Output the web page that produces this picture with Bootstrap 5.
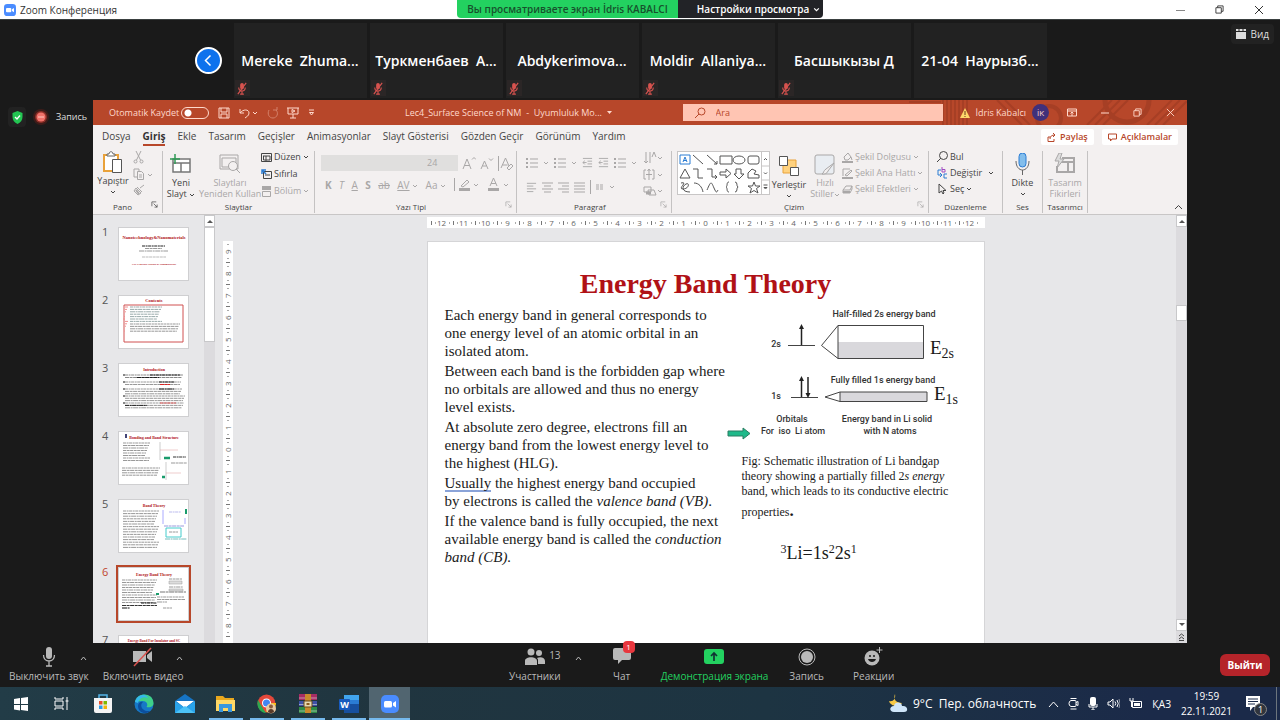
<!DOCTYPE html>
<html lang="ru">
<head>
    <meta charset="UTF-8">
    <meta name="viewport" content="width=device-width, initial-scale=1.0">
    <title>Zoom Конференция</title>
    <link href="https://cdn.jsdelivr.net/npm/bootstrap@5.3.2/dist/css/bootstrap.min.css" rel="stylesheet">
    <style>
        body {
            height: 100vh;
            background-color: #1a1a1a;
            font-family: "Open Sans", "Noto Sans", sans-serif;
            font-size: 10px;
            line-height: 14px;
            overflow: hidden;
        }
        svg { display: block; flex-shrink: 0; }
        button { font: inherit; color: inherit; background: none; border: 0; padding: 0; }
        .ico { fill: none; stroke: currentColor; }
        .keep-space { white-space: pre; }
        .third { flex: 1 1 0; }

        /* Заголовок окна */
        .win-title { height: 19px; background: #fff; color: #333; }
        .win-btns { gap: 30px; margin-right: 16px; }
        .share-pill { height: 18px; font-weight: 600; font-size: 10px; border-radius: 0 0 4px 4px; overflow: hidden; }
        .share-who { background: #23d160; color: #17502c; width: 221px; }
        .share-opt { background: #222327; color: #fff; width: 145px; }

        /* Лента участников */
        .people { height: 81px; padding: 3px 0 2px; border-top: 1px solid #3a4040; }
        .people-list { gap: 3px; }
        .person { width: 133px; background: #222; color: #fff; font-size: 14px; font-weight: 600; white-space: pre; }
        .muted { left: 1px; bottom: 2px; width: 15px; height: 16px; background: #2b2626; }
        .prev-btn { width: 27px; height: 27px; border-radius: 50%; border: 2px solid #fff; background: #0e72ed; margin-right: 12px; }
        .view-btn { height: 20px; padding: 0 5px; border-radius: 4px; background: #222; color: #ddd; margin: 1px 6px; font-size: 10px; }
        .side { width: 93px; color: #ddd; font-size: 10px; }
        .side-in { padding: 7px 0 0 8px; gap: 6px; }
        .shield-box { width: 18px; height: 20px; background: #222; border-radius: 4px; }

        /* PowerPoint */
        .ppt { background: #e7e7e9; font-size: 9px; line-height: 12px; color: #444; }
        .ppt-title { height: 25px; background: #b7472a; color: #ffd9cc; }
        .ppt-title .left-part { width: 312px; padding-left: 16px; gap: 9px; }
        .user-part { padding: 0 12px 0 17px; gap: 6px; }
        .win-ctl { gap: 24px; padding-left: 12px; }
        .search-box { height: 17px; width: 260px; background: #ffc5b3; color: #b7472a; padding: 0 11px; }
        .search-box input { border: 0; background: none; font: inherit; color: inherit; outline: 0; min-width: 0; }
        .search-box input::placeholder { color: #b7472a; }
        .avatar { width: 17px; height: 17px; border-radius: 50%; background: #40307a; font-size: 8px; }
        .toggle-sw { appearance: none; width: 28px; height: 12px; border: 1px solid #ffd9cc; border-radius: 6px; margin: 0;
            background: radial-gradient(circle at 6px 5px, #fff 3px, transparent 4px); }
        .tabs-row { height: 24px; background: #f3f0f0; padding: 0 9px; font-size: 10px; }
        .tabs-list { gap: 12px; }
        .tabs-row .tab-link { color: #444; text-decoration: none; line-height: 15px; border-bottom: 2px solid transparent; }
        .tabs-row .tab-link.active { font-weight: 700; border-color: #b7472a; color: #333; }
        .red-btn { background: #fff; color: #b7472a; font-weight: 600; font-size: 9px; height: 16px; padding: 0 6px; border-radius: 2px; }
        .ribbon { height: 66px; background: #f3f0f0; border-bottom: 1px solid #c8c6c6; }
        .rgroup { border-right: 1px solid #c4c2c2; margin: 2px 0 1px; }
        .rgroup .foot { height: 12px; line-height: 11px; font-size: 8px; }
        .off { color: #a9a7a7; }
        .big { line-height: 11px; text-align: center; }
        .gap-s { gap: 4px; }
        .gap-xs { gap: 2px; }
        .font-sel { height: 16px; border: 0; background: #e0dfde; color: #a9a7a7; font: inherit; padding: 0 2px; appearance: none; border-radius: 0; }
        .shapes { border: 1px solid #c8c6c6; background: #fff; width: 93px; height: 44px; }
        .w-pano { width: 70px; } .w-slides { width: 152px; } .w-font { width: 202px; } .w-par { width: 155px; }
        .w-draw { width: 257px; } .w-edit { width: 74px; } .w-voice { width: 40px; } .w-design { width: 45px; }

        .thumbs { width: 111px; padding: 12px 0 0 9px; }
        .thumb-row { height: 54px; margin-bottom: 14px; }
        .thumb-num { width: 16px; font-size: 11px; line-height: 10px; color: #555; }
        .thumb { width: 71px; height: 54px; background: #fff; border: 1px solid #cfcfd1; }
        .thumb-on { outline: 2px solid #b7472a; }
        .thumb-row .red-num { color: #c0452c; }
        .vscroll { width: 11px; background: #dcdbde; }
        .vscroll .box { background: #fff; border: 1px solid #c8c8ca; height: 12px; }
        .vscroll .grip { background: #fff; border: 1px solid #c8c8ca; }
        .vruler { width: 10px; background: #fff; margin-top: 26px; overflow: hidden; color: #666; }
        .vruler span { height: 22px; flex-shrink: 0; writing-mode: vertical-rl; transform: rotate(180deg); text-align: center; line-height: 10px; font-size: 8px;
            background: linear-gradient(#777, #777) center 0 / 4px 1px no-repeat, linear-gradient(#aaa, #aaa) center 4px / 2px 1px no-repeat, linear-gradient(#aaa, #aaa) center 18px / 2px 1px no-repeat; }
        .canvas { padding-left: 2px; }
        .hruler { width: 558px; height: 11px; background: #fff; margin: 2px auto 13px; padding: 0 4px; color: #666; }
        .hruler span { flex: 1; text-align: center; line-height: 11px; font-size: 8px;
            background: linear-gradient(#777, #777) 0 center / 1px 4px no-repeat, linear-gradient(#aaa, #aaa) 4px center / 1px 2px no-repeat, linear-gradient(#aaa, #aaa) 18px center / 1px 2px no-repeat; }
        .slide { width: 558px; margin: 0 auto; background: #fff; border: 1px solid #d5d5d7; border-bottom: 0; padding: 26px 0 0 17px;
            font-family: "Liberation Serif", "Noto Sans", serif; color: #1a1a1a; }
        .slide h1 { font-size: 28px; line-height: 32px; font-weight: 700; color: #b01116; text-align: center; margin: 0 17px 6px 0; }
        .slide-text { width: 297px; font-size: 15px; line-height: 18px; white-space: nowrap; }
        .slide-text p { margin: 0 0 2px; }
        .spell { border-bottom: 2px solid #8aa3d8; display: inline-block; line-height: 14px; }
        .fig-text { font-size: 12px; line-height: 15px; white-space: nowrap; margin: 12px 0 16px; }
        .fig-text .last-line { line-height: 24px; }
        .fig-text b { font-size: 17px; }
        .formula { font-size: 18px; line-height: 26px; padding-left: 39px; }
        .formula sup { font-size: 12px; }
        .green-arrow { left: 299px; top: 185px; }

        /* Нижняя панель Zoom */
        .zoom-bar { height: 44px; padding: 0 10px 0 9px; color: #b9b9b9; font-size: 10px; }
        .zb { display: flex; flex-direction: column; align-items: center; line-height: 18px; }
        .zb .zi { height: 24px; display: flex; align-items: center; justify-content: center; padding-top: 3px; }
        .up { height: 28px; padding-top: 2px; }
        .leave { background: #b5242a; color: #fff; font-weight: 700; width: 50px; height: 22px; border-radius: 6px; }
        .chat-badge { left: 10px; top: -7px; width: 12px; height: 12px; font-size: 8px; line-height: 12px; background: #e8373e; color: #fff; border-radius: 4px; }

        /* Панель задач Windows */
        .taskbar { height: 33px; background: linear-gradient(90deg, #223c47, #20353f 30%, #1d3442 60%, #1b2a49 90%); color: #fff; font-size: 11px; }
        .task { width: 41px; height: 33px; display: flex; align-items: center; justify-content: center; }
        .run { background: linear-gradient(#76b9ed, #76b9ed) center bottom / 34px 2px no-repeat; }
        .task-on { background: linear-gradient(#76b9ed, #76b9ed) center bottom / 41px 2px no-repeat #516570; }
        .weather { font-size: 12px; }
        .tray { gap: 9px; padding: 0 10px 0 12px; font-size: 10px; }
        .clock { font-size: 10px; line-height: 15px; }
        .note-num { left: 8px; top: 7px; width: 13px; height: 13px; border-radius: 50%; background: #30353d; border: 1px solid #888; font-size: 9px; line-height: 11px; }
        .desk-edge { height: 33px; margin: 0 3px 0 15px; }
    </style>
</head>
<body class="d-flex flex-column">
    <svg width="0" height="0" class="position-absolute">
        <symbol id="car" viewBox="0 0 6 4"><path d="M1 1l2 2 2-2" fill="none" stroke="currentColor"/></symbol>
        <symbol id="launch" viewBox="0 0 8 8"><path d="M1 6V1h5M3 3l4 4M7 4v3H4" fill="none" stroke="currentColor" stroke-width=".8"/></symbol>
        <symbol id="mute" viewBox="0 0 12 14"><rect x="4" y="1" width="4" height="7" rx="2" fill="#d9534f"/><path d="M2.500 6c0 5 7 5 7 0M6 10v3M4 13h4M1.500 13L10.500 1" stroke="#d9534f" stroke-width="1.200" fill="none"/></symbol>
        <symbol id="restore" viewBox="0 0 10 10"><path d="M1 3h6v6H1zM3 3V1h6v6H7" fill="none" stroke="currentColor"/></symbol>
        <symbol id="xx" viewBox="0 0 10 10"><path d="M1 1l8 8M9 1L1 9" fill="none" stroke="currentColor"/></symbol>
        <symbol id="al" viewBox="0 0 12 12"><path d="M1 2h10M1 5h7M1 8h10M1 11h7" fill="none" stroke="currentColor"/></symbol>
        <symbol id="lst" viewBox="0 0 12 12"><path d="M4 2h8M4 6h8M4 10h8" fill="none" stroke="currentColor"/><path d="M0 2h2M0 6h2M0 10h2" stroke="currentColor" stroke-width="2"/></symbol>
        <symbol id="ind" viewBox="0 0 12 12"><path d="M1 1h10M6 4h5M6 7h5M1 10h10M5 5.500H1M3 3.500l-2 2 2 2" fill="none" stroke="currentColor"/></symbol>
        <symbol id="cam" viewBox="0 0 18 18"><rect width="18" height="18" rx="5" fill="#4a8cff"/><rect x="3" y="6" width="8" height="6.500" rx="1.500" fill="#fff"/><path d="M12 8l3-2v6.500l-3-2z" fill="#fff"/></symbol>
    </svg>

    <header class="win-title d-flex flex-shrink-0">
        <div class="third d-flex align-items-center">
            <svg class="ms-1 me-1" width="12" height="12"><use href="#cam"/></svg>
            <span>Zoom Конференция</span>
        </div>
        <div class="share-pill d-flex">
            <div class="share-who d-flex align-items-center justify-content-center">Вы просматриваете экран İdris KABALCI</div>
            <button class="share-opt d-flex align-items-center justify-content-center gap-1 ps-3">Настройки просмотра <svg width="7" height="5"><use href="#car"/></svg></button>
        </div>
        <div class="third d-flex align-items-center justify-content-end">
            <div class="win-btns d-flex align-items-center">
                <button aria-label="Свернуть"><svg width="9" height="9"><path d="M0 5.500h9" stroke="#888"/></svg></button>
                <button aria-label="Развернуть"><svg width="9" height="9"><use href="#restore"/></svg></button>
                <button aria-label="Закрыть"><svg width="10" height="10"><use href="#xx"/></svg></button>
            </div>
        </div>
    </header>

    <section class="people d-flex flex-shrink-0">
        <div class="third d-flex align-items-center justify-content-end">
            <button class="prev-btn d-flex align-items-center justify-content-center" aria-label="Назад"><svg width="8" height="13"><path d="M6.500 1.500l-5 5 5 5" fill="none" stroke="#fff" stroke-width="1.500"/></svg></button>
        </div>
        <div class="people-list d-flex" id="people"></div>
        <div class="third d-flex align-items-start justify-content-end">
            <button class="view-btn d-flex align-items-center gap-1"><svg width="10" height="10" fill="#ddd"><path d="M0 0h2.500v2H0zM3.500 0h3v2h-3zM7.500 0H10v2H7.500zM0 3h10v7H0z"/></svg>Вид</button>
        </div>
    </section>

    <main class="d-flex flex-fill" style="min-height: 0">
        <aside class="side">
            <div class="side-in d-flex align-items-center">
                <div class="shield-box d-flex align-items-center justify-content-center">
                    <svg width="11" height="13"><path d="M5.500 0l5 2v4c0 3.500-2 5.500-5 7-3-1.500-5-3.500-5-7V2z" fill="#23c552"/><path d="M3 6l2 2 3-3.500" stroke="#fff" fill="none" stroke-width="1.300"/></svg>
                </div>
                <svg width="18" height="18"><circle cx="9" cy="9" r="8" fill="#3d1c19"/><circle cx="9" cy="9" r="6" fill="#8e2f28"/><circle cx="9" cy="9" r="4.500" fill="#f0726a"/><path d="M6 9h6" stroke="#ffc9c0"/></svg>
                <span style="font-size: 9px">Запись</span>
            </div>
        </aside>

        <section class="ppt flex-fill d-flex flex-column" style="min-width: 0">
            <div class="ppt-title d-flex align-items-center flex-shrink-0 position-relative">
                <svg class="position-absolute end-0 top-0" width="280" height="25" fill="none" stroke="#9c3a22" stroke-width="2" opacity=".6">
                    <path d="M2 2h32M36 0v25M40 0v25M44 0v25M48 0v25M52 0v25M56 0v25M60 0v25M90 0l25 25M98 0l25 25M180 25l25-25M188 25l25-25M196 25l25-25M240 25l25-25M248 25l25-25M256 25l24-24"/>
                    <circle cx="142" cy="18" r="12" stroke-width="4"/><circle cx="220" cy="0" r="22" stroke-width="5"/>
                </svg>
                <div class="left-part d-flex align-items-center">
                    <label class="d-flex align-items-center gap-xs text-nowrap">Otomatik Kaydet <input type="checkbox" class="toggle-sw"></label>
                    <svg class="ico" width="12" height="12"><path d="M1 1h10v10H1zM3 1v4h6V1M3 11V7h6v4"/></svg>
                    <svg class="ico" width="19" height="12"><path d="M1 2v4h4M1 6c3-4 9-4 9 0 0 3-3 4-4 5M14 5l2 2 2-2"/></svg>
                    <svg class="ico" width="11" height="12" opacity=".4"><path d="M2 3c-2 4 0 8 4 8s6-5 3-8M6 3h4V0"/></svg>
                    <svg class="ico" width="12" height="12"><path d="M0 1h12M1 1v6h10V1M6 7v4M3 11h6M5 2.500l3 1.500-3 1.500z"/></svg>
                    <svg class="ico" width="7" height="7"><path d="M1 1h5M1.500 3.500h4L3.500 6z"/></svg>
                </div>
                <div class="flex-fill keep-space">Lec4_Surface Science of NM  -  Uyumluluk Mo...  <svg class="d-inline" width="5" height="4"><path d="M0 0h5L2.500 3z" fill="#ffd9cc"/></svg></div>
                <label class="search-box d-flex align-items-center gap-2 position-relative">
                    <svg class="ico" width="12" height="12"><circle cx="7.500" cy="4.500" r="3.500"/><path d="M5 7l-4 4"/></svg>
                    <input type="text" placeholder="Ara" aria-label="Ara">
                </label>
                <div class="user-part d-flex align-items-center position-relative">
                    <svg width="10" height="10"><path d="M5 0l5 10H0z" fill="#ffd76a"/><path d="M5 3v4M5 8v1" stroke="#6b3a1c"/></svg>
                    <span>İdris Kabalcı</span>
                    <span class="avatar d-flex align-items-center justify-content-center">İK</span>
                    <div class="win-ctl d-flex align-items-center">
                        <svg class="ico" width="10" height="9"><path d="M.5 1h9v7h-9zM.5 3h9M5 8V4M3.500 5.500L5 4l1.500 1.500"/></svg>
                        <svg class="ico" width="8" height="9"><path d="M0 5h8"/></svg>
                        <svg width="9" height="9"><use href="#restore"/></svg>
                        <svg width="9" height="9"><use href="#xx"/></svg>
                    </div>
                </div>
            </div>

            <nav class="tabs-row d-flex align-items-center flex-shrink-0">
                <div class="tabs-list d-flex text-nowrap" id="tabs"></div>
                <div class="ms-auto d-flex gap-2">
                    <button class="red-btn d-flex align-items-center gap-1"><svg class="ico" width="9" height="9"><path d="M3 4H1v4.500h6V6M3 6c0-3 2-4 5-4M6 0l2 2-2 2"/></svg>Paylaş</button>
                    <button class="red-btn d-flex align-items-center gap-1"><svg class="ico" width="9" height="9"><path d="M.5 1h8v5H4L2.500 8V6h-2z"/></svg>Açıklamalar</button>
                </div>
            </nav>

            <div class="ribbon d-flex flex-shrink-0">
                <div class="rgroup w-pano d-flex flex-column">
                    <div class="flex-fill d-flex">
                        <button class="big d-flex flex-column align-items-center" style="width: 40px">
                            <svg width="20" height="24" fill="#fff"><path d="M1 4h14v16H1z" stroke="#e9a23b" stroke-width="2"/><path d="M4 5V3h2c0-3 4-3 4 0h2v2z" stroke="#666"/><path d="M9.500 8.500h9v13h-9z" stroke="#555"/></svg>
                            Yapıştır<svg class="mt-1" width="6" height="4"><use href="#car"/></svg>
                        </button>
                        <div class="off d-flex flex-column gap-s">
                            <svg class="ico" width="11" height="13"><path d="M3 0l4.500 9M8 0L3.500 9"/><circle cx="2.500" cy="10.500" r="1.500"/><circle cx="8.500" cy="10.500" r="1.500"/></svg>
                            <svg class="ico" width="20" height="12"><path d="M5 9H1V1h5v2M4.500 3.500h4l2 2v6h-6zM6 7h3M6 9h3M15 6l2 2 2-2"/></svg>
                            <svg class="ico" width="12" height="12"><path d="M11 1L7 4M4 3l5 5M3 4l5 5-3 2-4-4z"/><path d="M3 6l3 4" stroke-width="2"/></svg>
                        </div>
                    </div>
                    <div class="foot d-flex justify-content-between pe-1" style="padding-left: 20px">Pano <svg width="7" height="7"><use href="#launch"/></svg></div>
                </div>
                <div class="rgroup w-slides d-flex flex-column">
                    <div class="flex-fill d-flex text-nowrap">
                        <button class="big" style="width: 36px">
                            <svg class="mx-auto" width="22" height="24"><path d="M3 6h17v13H3zM3 10h17M11 10v9" fill="#fff" stroke="#777" stroke-width="1.500"/><path d="M5 1v10M0 6h10" stroke="#2f9a55" stroke-width="1.500"/></svg>
                            Yeni<br>Slayt <svg class="d-inline" width="6" height="4"><use href="#car"/></svg>
                        </button>
                        <button class="big off" style="width: 62px">
                            <svg class="ico mx-auto" width="22" height="24"><path d="M1 2h18v14H1zM3 5h14v9H3z"/><circle cx="14" cy="13" r="4.500" fill="#f3f0f0"/><path d="M17 16l4 4"/></svg>
                            Slaytları<br>Yeniden Kullan
                        </button>
                        <div class="d-flex flex-column" style="gap: 5px">
                            <button class="d-flex align-items-center gap-xs"><svg width="11" height="9" class="ico"><path d="M.5.5h10v8H.5zM2 3h7M5 3v5M2.500 3v4h6.500V3"/></svg>Düzen <svg width="6" height="4"><use href="#car"/></svg></button>
                            <button class="d-flex align-items-center gap-xs"><svg width="11" height="10" class="ico"><path d="M2.500 2.500h8v7h-8zM4 6h5"/><path d="M1 5V1h4M1 1l4 4" stroke="#2b7cd3" stroke-width="1.500"/></svg>Sıfırla</button>
                            <button class="off d-flex align-items-center gap-xs"><svg width="11" height="11" class="ico"><path d="M1 1h9M1 3h9" stroke-width="2"/><path d="M1.500 5.500h8v5h-8z"/></svg>Bölüm <svg width="6" height="4"><use href="#car"/></svg></button>
                        </div>
                    </div>
                    <div class="foot text-center">Slaytlar</div>
                </div>
                <div class="rgroup w-font off d-flex flex-column">
                    <div class="flex-fill d-flex flex-column" style="padding: 4px 3px 0 6px; gap: 7px">
                        <div class="d-flex align-items-center gap-1">
                            <div class="d-flex"><select class="font-sel" style="width: 104px" aria-label="Yazı tipi"><option></option></select><select class="font-sel" style="width: 33px" aria-label="Boyut"><option>24</option></select></div>
                            <svg class="ico" width="14" height="14"><path d="M1 13L5 3l4 10M2.500 9.500h5M10 3.500L12 1.500l2 2"/></svg>
                            <svg class="ico" width="14" height="14"><path d="M1 13l3.500-8L8 13M2.500 10h4M9 2.500l2 2 2-2"/></svg>
                            <svg class="ico" width="16" height="15"><path d="M.5 0v15M3 12L7.500 2 11 10M4.500 9h5M9 12l4-4 2 2-4 4z"/></svg>
                        </div>
                        <div class="d-flex align-items-center justify-content-between" style="padding: 0 4px; font-size: 10px">
                            <b>K</b><i>T</i><u>A</u><b>S</b><s>ab</s><span><u>AV</u> <svg class="d-inline" width="6" height="4"><use href="#car"/></svg></span>
                            <span>Aa <svg class="d-inline" width="6" height="4"><use href="#car"/></svg></span>
                            <svg class="ico" width="26" height="13"><path d="M.5 0v13M7 8l6-6 2 2-6 5zM20 6l2 2 2-2"/><path d="M5 11.500h11" stroke-width="3"/></svg>
                            <svg class="ico" width="22" height="13"><path d="M3 8l3.500-8L10 8M4 5.500h5M17 6l2 2 2-2"/><path d="M1 11.500h11" stroke-width="3"/></svg>
                        </div>
                    </div>
                    <div class="foot d-flex pe-1" style="color: #444; padding-left: 81px">Yazı Tipi <svg class="ms-auto off" width="7" height="7"><use href="#launch"/></svg></div>
                </div>
                <div class="rgroup w-par off d-flex flex-column">
                    <div class="flex-fill d-flex justify-content-between" style="padding: 0 8px 0 9px">
                        <div class="d-flex flex-column" style="padding-top: 6px; gap: 11px">
                            <div class="d-flex align-items-center" style="gap: 5px">
                                <svg width="12" height="12"><use href="#lst"/></svg><svg width="6" height="4"><use href="#car"/></svg>
                                <svg width="12" height="12"><use href="#lst"/></svg><svg width="6" height="4"><use href="#car"/></svg>
                                <svg width="11" height="12"><use href="#ind"/></svg><svg width="11" height="12"><use href="#ind"/></svg>
                                <svg width="12" height="12"><use href="#lst"/></svg><svg width="6" height="4"><use href="#car"/></svg>
                            </div>
                            <div class="d-flex align-items-center" style="gap: 5px">
                                <svg width="11" height="12"><use href="#al"/></svg><svg class="ico" width="11" height="12"><path d="M0 2h11M2 5h7M0 8h11M2 11h7"/></svg><svg class="ico" width="11" height="12"><path d="M0 2h11M4 5h7M0 8h11M4 11h7"/></svg><svg class="ico" width="11" height="12"><path d="M0 2h11M0 5h11M0 8h11M0 11h11"/></svg>
                                <svg class="ico" width="14" height="14"><path d="M.5 0v14M6 5h3M10 5h3M6 7h3M10 7h3M6 9h3M10 9h3"/></svg><svg width="6" height="4"><use href="#car"/></svg>
                            </div>
                        </div>
                        <div class="d-flex flex-column gap-s">
                            <svg class="ico" width="20" height="13"><path d="M3 1v11M1 10l2 2 2-2M7 12V1M9 6l2-5 2 5M15 6l2 2 2-2"/></svg>
                            <svg class="ico" width="20" height="13"><path d="M3 2H1v9h2M9 2h2v9H9M6 1v11M3 6.500h6M4.500 3L6 1l1.500 2M15 6l2 2 2-2"/></svg>
                            <svg class="ico" width="20" height="12"><path d="M1 2h7v5H1zM5 5h6l2 5H6zM15 5l2 2 2-2"/><path d="M3 8h5" stroke-width="3"/></svg>
                        </div>
                    </div>
                    <div class="foot d-flex pe-1" style="color: #444; padding-left: 57px">Paragraf <svg class="ms-auto off" width="7" height="7"><use href="#launch"/></svg></div>
                </div>
                <div class="rgroup w-draw d-flex flex-column">
                    <div class="flex-fill d-flex text-nowrap" style="padding-left: 5px">
                        <div class="shapes">
                            <svg class="ico" width="91" height="42" color="#555">
                                <path d="M2 3h10v9H2z" stroke="#2b7cd3"/><path d="M5 10l2-5 2 5M5.500 8.500h3" stroke="#2b7cd3"/>
                                <path d="M15 3l10 9M29 3l10 9v-3M39 12h-3M42 4h12v8H42z"/><ellipse cx="61" cy="8" rx="6" ry="4"/><rect x="70" y="4" width="11" height="8" rx="2"/>
                                <path d="M7 17l5 9H2zM15 17h5v9h5M29 17h5v8h5l-2-2M39 25l-2 2M42 20h6v-3l5 4.500-5 4.500v-3h-6zM58 17h5v5h3l-5 5-5-5h2zM70 26v-5l4-4 4 2-2 3 5 1v3z"/>
                                <path d="M3 31c8-2-4 6 2 6s7-7 3-5-5 8 4 8M16 31c5 0 8 4 9 9M29 38c4-9 4-9 7-2s3 3 4 2M51 30c-3 0-1 4-3 5 2 1 0 5 3 5M57 30c3 0 1 4 3 5-2 1 0 5-3 5M76 30l1.500 4H82l-3.500 2.500L80 41l-4-2.500L72 41l1.500-4.500L70 34h4.500z"/>
                                <path d="M83.500 0v42M83.500 14h8M83.500 28h8" stroke="#c8c6c6"/><path d="M86 8l1.500-1.500L89 8M86 20.500l1.500 1.500 1.500-1.500M85.500 33h4M86 35.500h3L87.500 37z"/>
                            </svg>
                        </div>
                        <button class="big" style="width: 38px">
                            <svg class="mx-auto" width="22" height="24"><path d="M5 5h13v13H5z" fill="#ffd27f" stroke="#e9a23b"/><path d="M1.500 1.500h8v9h-8zM12.500 12.500h8v8h-8z" fill="#fff" stroke="#555"/></svg>
                            Yerleştir<svg class="mx-auto mt-1" width="6" height="4"><use href="#car"/></svg>
                        </button>
                        <button class="big off" style="width: 34px">
                            <svg class="ico mx-auto" width="22" height="24"><rect x="1" y="2" width="19" height="19" rx="2" fill="#e9edf2"/><path d="M20 10l-6 8c-1 3-4 3-6 3 2-1 1-3 4-5z" fill="#f3f0f0"/></svg>
                            Hızlı<br>Stiller<svg class="d-inline" width="6" height="4"><use href="#car"/></svg>
                        </button>
                        <div class="off d-flex flex-column gap-s">
                            <button class="d-flex align-items-center gap-xs"><svg class="ico" width="11" height="11"><path d="M2 5l4-4 3 4-3 3H3zM9 5l1 3"/><path d="M0 10h11" stroke-width="2"/></svg>Şekil Dolgusu <svg width="6" height="4"><use href="#car"/></svg></button>
                            <button class="d-flex align-items-center gap-xs"><svg class="ico" width="11" height="11"><path d="M8 1H1v7M3 7l6-5 1 1-5 5z"/><path d="M0 10h11" stroke-width="2"/></svg>Şekil Ana Hattı <svg width="6" height="4"><use href="#car"/></svg></button>
                            <button class="d-flex align-items-center gap-xs"><svg class="ico" width="11" height="11"><path d="M1 6l3-4h6L8 6zM10 2v3L8 9H1V6"/><path d="M1 8h7" stroke-width="2"/></svg>Şekil Efektleri <svg width="6" height="4"><use href="#car"/></svg></button>
                        </div>
                    </div>
                    <div class="foot d-flex pe-1" style="padding-left: 112px">Çizim <svg class="ms-auto off" width="7" height="7"><use href="#launch"/></svg></div>
                </div>
                <div class="rgroup w-edit d-flex flex-column">
                    <div class="flex-fill d-flex flex-column gap-s" style="padding-left: 8px">
                        <button class="d-flex align-items-center gap-xs"><svg class="ico" width="11" height="12"><circle cx="6.500" cy="4.500" r="4"/><path d="M4 7l-4 4"/></svg>Bul</button>
                        <button class="d-flex align-items-center gap-xs"><svg class="ico" width="11" height="12"><path d="M4 3H1v5h4M3 6l2 2-2 2" stroke="#2b7cd3"/><path d="M5 0v5h3V2.500H5" stroke="#a04ac0"/><path d="M10 7H7v4h3" stroke="#2b7cd3"/></svg>Değiştir <svg class="ms-1" width="6" height="4"><use href="#car"/></svg></button>
                        <button class="d-flex align-items-center gap-xs"><svg class="ico" width="11" height="12"><path d="M2 1v9l2.500-2 1.500 3 1-1-1-2.500h3z"/></svg>Seç <svg width="6" height="4"><use href="#car"/></svg></button>
                    </div>
                    <div class="foot text-center">Düzenleme</div>
                </div>
                <div class="rgroup w-voice d-flex flex-column">
                    <button class="big flex-fill">
                        <svg class="mx-auto" width="18" height="24"><rect x="5" y="0" width="7" height="14" rx="3.500" fill="#83beec" stroke="#2b7cd3"/><path d="M2 8c0 12 13 12 13 0M8.500 17v5" fill="none" stroke="#666"/></svg>
                        Dikte<svg class="mx-auto mt-1 mb-1" width="6" height="4"><use href="#car"/></svg>
                    </button>
                    <div class="foot text-center">Ses</div>
                </div>
                <div class="rgroup w-design d-flex flex-column">
                    <button class="big off flex-fill">
                        <svg class="ico mx-auto" width="24" height="24" stroke-width="2"><path d="M9 5h12v14H4v-6M7 9h14M15 9v10"/><path d="M6 0L2 8h4l-2 7 7-9H7l2-6z" fill="#ddd" stroke-width="1"/></svg>
                        Tasarım<br>Fikirleri
                    </button>
                    <div class="foot text-center">Tasarımcı</div>
                </div>
                <button class="ms-auto align-self-end pe-1 pb-1" aria-label="Daralt"><svg class="ico" width="9" height="6"><path d="M1 5l3.500-3.500L8 5"/></svg></button>
            </div>

            <div class="flex-fill d-flex overflow-hidden" style="min-height: 0">
                <div class="thumbs" id="thumbs"></div>
                <div class="vscroll me-2"><div class="box d-flex align-items-center justify-content-center"><svg width="6" height="4"><path d="M0 4l3-3 3 3z" fill="#555"/></svg></div><div class="grip" style="height: 115px"></div></div>
                <div class="vruler d-flex flex-column" id="vruler"></div>
                <div class="canvas flex-fill d-flex flex-column">
                    <div class="hruler d-flex flex-shrink-0" id="hruler"></div>
                    <article class="slide flex-fill position-relative">
                        <h1>Energy Band Theory</h1>
                        <div class="d-flex">
                            <div class="slide-text">
                                <p>Each energy band in general corresponds to<br>one energy level of an atomic orbital in an<br>isolated atom.</p>
                                <p>Between each band is the forbidden gap where<br>no orbitals are allowed and thus no energy<br>level exists.</p>
                                <p>At absolute zero degree, electrons fill an<br>energy band from the lowest energy level to<br>the highest (HLG).</p>
                                <p><span class="spell">Usually</span> the highest energy band occupied<br>by electrons is called the <i>valence band (VB)</i>.</p>
                                <p>If the valence band is fully occupied, the next<br>available energy band is called the <i>conduction<br>band (CB).</i></p>
                            </div>
                            <div>
                                <svg width="216" height="136" font-family="Roboto, sans-serif" font-size="9" font-weight="500" fill="#333" text-anchor="middle">
                                    <text x="142" y="11">Half-filled 2s energy band</text>
                                    <text x="34" y="41">2s</text>
                                    <path d="M96 36h85v16H96zM98 86h87v9H98z" fill="#d9d8dc"/>
                                    <path d="M46 39.500h27M96 19.500h85.500v33H96zM96 19.500L79.500 39.500 96 52.500M49 91.500h27M98 86h87v9.500H98zM98 86L83 91l15 4.500" fill="none" stroke="#444"/>
                                    <path d="M59.500 39V21M59.500 91V74M66 71v17" stroke="#222" stroke-width="1.500"/>
                                    <path d="M57 23l2.500-5 2.500 5zM57 75l2.500-5 2.500 5zM63.500 87l2.500 5 2.500-5z" fill="#222"/>
                                    <text x="141" y="77">Fully filled 1s energy band</text>
                                    <text x="34" y="93">1s</text>
                                    <text x="50" y="116">Orbitals</text><text x="51" y="128" xml:space="preserve">For  iso  Li atom</text>
                                    <text x="145" y="116">Energy band in Li solid</text><text x="148" y="128">with N atoms</text>
                                    <g font-family="Liberation Serif, serif" font-weight="400" font-size="19" fill="#1a1a1a" text-anchor="start">
                                        <text x="188" y="48">E<tspan font-size="14" dy="4">2s</tspan></text>
                                        <text x="192" y="94">E<tspan font-size="14" dy="4">1s</tspan></text>
                                    </g>
                                </svg>
                                <div class="fig-text">Fig: Schematic illustration of Li bandgap<br>theory showing a partially filled 2<i>s energy</i><br>band, which leads to its conductive electric<div class="last-line">properties<b>.</b></div></div>
                                <div class="formula"><sup>3</sup>Li=1s<sup>2</sup>2s<sup>1</sup></div>
                            </div>
                        </div>
                        <svg class="green-arrow position-absolute" width="25" height="13"><path d="M1 4h15V1l7 5.500-7 5.500V9H1z" fill="#1fb98a" stroke="#2b7d62"/></svg>
                    </article>
                </div>
                <div class="vscroll d-flex flex-column">
                    <div class="box d-flex align-items-center justify-content-center"><svg width="6" height="4"><path d="M0 4l3-3 3 3z" fill="#555"/></svg></div>
                    <div class="grip" style="height: 16px; margin-top: 78px"></div>
                    <div class="box mt-auto d-flex align-items-center justify-content-center"><svg width="6" height="4"><path d="M0 0l3 3 3-3z" fill="#555"/></svg></div>
                    <svg width="11" height="12" class="ico"><path d="M3 5l2.500-2L8 5M3 8l2.500-2L8 8M3 9.500h5"/></svg>
                </div>
            </div>
        </section>

        <aside class="side flex-shrink-0"></aside>
    </main>

    <section class="zoom-bar d-flex flex-shrink-0 justify-content-between align-items-center">
        <div class="d-flex align-self-start">
            <button class="zb"><span class="zi"><svg width="14" height="20" fill="#b9b9b9"><rect x="4" y="0" width="6" height="12" rx="3"/><path d="M1.500 8c0 8 11 8 11 0M7 14v5M4 19h6" fill="none" stroke="#b9b9b9" stroke-width="1.300"/></svg></span>Выключить звук</button>
            <button class="up" aria-label="Звук" style="margin-left: -9px"><svg class="ico" width="7" height="5"><path d="M1 4l2.500-3L6 4"/></svg></button>
            <button class="zb" style="margin-left: 16px"><span class="zi"><svg width="22" height="20"><path d="M1 4h13v11H1zM15 8l5-4v11l-5-4z" fill="#b9b9b9"/><path d="M2 19L19 1" stroke="#d9534f" stroke-width="1.500"/></svg></span>Включить видео</button>
            <button class="up" aria-label="Видео" style="margin-left: -7px"><svg class="ico" width="7" height="5"><path d="M1 4l2.500-3L6 4"/></svg></button>
        </div>
        <div class="d-flex align-self-start">
            <button class="zb"><span class="zi gap-1 ps-3"><svg width="20" height="17" fill="#b9b9b9"><circle cx="6" cy="4" r="3.500"/><circle cx="14" cy="5" r="3"/><path d="M0 17v-4c0-5 12-5 12 0v4zM13 16V12c0-1-1-2-1-2 4-2 8 0 8 3v3z"/></svg><span class="mb-1">13</span></span>Участники</button>
            <button class="up" aria-label="Участники" style="margin-left: 14px"><svg class="ico" width="7" height="5"><path d="M1 4l2.500-3L6 4"/></svg></button>
            <button class="zb" style="margin-left: 31px"><span class="zi"><span class="position-relative"><svg width="18" height="17"><path d="M2 0h14q2 0 2 2v8q0 2-2 2H9l-4 4v-4H2q-2 0-2-2V2q0-2 2-2z" fill="#b9b9b9"/></svg><span class="chat-badge position-absolute">1</span></span></span>Чат</button>
            <button class="zb" style="margin-left: 30px; color: #23d160"><span class="zi"><svg width="20" height="15"><rect width="20" height="15" rx="3" fill="#23d160"/><path d="M10 12V4M7 7l3-3 3 3" fill="none" stroke="#133" stroke-width="1.700"/></svg></span>Демонстрация экрана</button>
            <button class="zb" style="margin-left: 21px"><span class="zi"><svg width="18" height="18"><circle cx="9" cy="9" r="8" fill="none" stroke="#b9b9b9"/><circle cx="9" cy="9" r="6" fill="#b9b9b9"/></svg></span>Запись</button>
            <button class="zb" style="margin-left: 29px"><span class="zi"><svg width="19" height="19"><circle cx="8" cy="11" r="7.500" fill="#b9b9b9"/><path d="M4 12c1 4 7 4 8 0z" fill="#1a1a1a"/><path d="M5 9h2M9 9h2" stroke="#1a1a1a" stroke-width="1.500"/><path d="M15.500 0v6M12.500 3h6" stroke="#b9b9b9"/></svg></span>Реакции</button>
        </div>
        <button class="leave">Выйти</button>
    </section>

    <footer class="taskbar d-flex flex-shrink-0 align-items-center">
        <button class="task" aria-label="Пуск"><svg width="14" height="14" fill="#fff"><path d="M0 2l6-1v6H0zM7 1l7-1v7H7zM0 8h6v5.500L0 12.500zM7 8h7v6l-7-1z"/></svg></button>
        <button class="task" aria-label="Представление задач"><svg class="ico" width="15" height="13"><path d="M1 0v2h8V0M1 4h8v5H1zM1 13v-2h8v2M13 0v13M11.500 4h3"/></svg></button>
        <button class="task" aria-label="Store"><svg width="20" height="20"><path d="M6 5V1h8v4" fill="none" stroke="#55b5e8" stroke-width="1.500"/><path d="M1 4h18v13q0 2-2 2H3q-2 0-2-2z" fill="#f4f4f4"/><path d="M6 7h3.500v3.500H6z" fill="#e8502a"/><path d="M10.500 7H14v3.500h-3.500z" fill="#7fba00"/><path d="M6 11.500h3.500V15H6z" fill="#2a9be8"/><path d="M10.500 11.500H14V15h-3.500z" fill="#f5b50a"/></svg></button>
        <button class="task" aria-label="Edge"><svg width="20" height="20"><circle cx="10" cy="10" r="9.500" fill="#1778c6"/><path d="M1 8C3-2 19-2 19.500 9c0 4-4 5-7 4 2-3 0-6-4-6C5 7 2 8 1 8z" fill="#3fd08a"/><path d="M1 8C3 0 12-1 14 4c-5-2-9 0-10 5z" fill="#35b8ee"/><path d="M9 8c-4 3-1 10 7 9-4 4-12 2-12-5 0-3 3-5 5-4z" fill="#0c4f9e"/></svg></button>
        <button class="task" aria-label="Почта"><svg width="20" height="19"><path d="M0 7l10-7 10 7v12H0z" fill="#1674c4"/><path d="M1 7h18l-9 7z" fill="#fff"/><path d="M0 7l10 7-10 5zM20 7l-10 7 10 5z" fill="#29a3ea"/><path d="M0 19l10-7 10 7z" fill="#4cc3f7"/></svg></button>
        <button class="task run" aria-label="Проводник"><svg width="19" height="17"><path d="M0 1h7l2 2h9v13H0z" fill="#e9a81e"/><path d="M0 5h19v11H0z" fill="#ffd866"/><path d="M3 17V9h13v8h-4v-4H7v4z" fill="#3a97dd"/></svg></button>
        <button class="task run" aria-label="Chrome"><svg width="20" height="20"><circle cx="9.500" cy="9.500" r="9" fill="#e4483b"/><path d="M1 6l6 10 2 3C2 19-1 11 1 6z" fill="#2da94f"/><path d="M9 18l5-9h5c0 5-4 10-10 9z" fill="#fbc117"/><circle cx="9.500" cy="9" r="4.500" fill="#fff"/><circle cx="9.500" cy="9" r="3.500" fill="#4285f4"/><circle cx="14" cy="14.500" r="5" fill="#e7c9a4"/><path d="M11 18c0-4 6-4 6 0l-3 1.500z" fill="#5a3b2a"/><circle cx="14" cy="12.500" r="2" fill="#8b5b3c"/></svg></button>
        <button class="task run" aria-label="WinRAR"><svg width="20" height="20"><path d="M1 0h18v6H1z" fill="#a72c63"/><path d="M1 7h18v5H1z" fill="#3f51a8"/><path d="M1 13h18v6H1z" fill="#2f8c45"/><path d="M1 4h18M1 10.500h18M1 17h18" stroke="#ddd" stroke-width=".6"/><path d="M7 0h6v19H7z" fill="#c98a2c"/><path d="M6 7h8v6H6z" fill="#e8d9b0" stroke="#694b1d"/><path d="M8.500 9h3v2h-3z" fill="#8b5b1f"/></svg></button>
        <button class="task run" aria-label="Word"><svg width="20" height="18"><path d="M5 0h15v6H5z" fill="#41a5ee"/><path d="M5 5h15v5H5z" fill="#2b7cd3"/><path d="M5 9h15v9H5z" fill="#174f9e"/><rect y="4" width="11" height="11" rx="1" fill="#185abd"/><text x="5.500" y="13" font-size="9" font-weight="700" fill="#fff" text-anchor="middle">W</text></svg></button>
        <button class="task task-on" aria-label="Zoom"><svg width="18" height="18"><use href="#cam"/></svg></button>
        <div class="ms-auto d-flex align-items-center text-nowrap">
            <svg class="me-1" width="20" height="19"><path d="M6 0c-2 5 1 9 7 9-3 5-12 3-13-2 4 1 7-2 6-7z" fill="#f7c945"/><path d="M5 18c-5 0-5-6 0-6 1-5 8-4 8 0 6-1 7 6 2 6z" fill="#cfe5f8"/></svg>
            <span class="weather">9°C&nbsp; Пер. облачность</span>
            <div class="tray d-flex align-items-center">
                <svg class="ico" width="11" height="8"><path d="M1 7l4.500-5L10 7"/></svg>
                <svg class="ico" width="11" height="13"><path d="M2.500 1.500h6M2.500 12h6M3 3.500h4q1 0 1 1v4q0 1-1 1H3q-2-.5-2-3t2-3zM8 5.500l2-1v4l-2-1"/></svg>
                <svg width="10" height="13" fill="#fff"><rect x="2" width="6" height="9" rx="2"/><path d="M1 7v3h8V7M5 10v3M3 13h4" stroke="#fff" fill="none"/></svg>
                <svg class="ico" width="13" height="11"><path d="M1 4h2l3-3v9L3 7H1zM8 3.500q1.500 2 0 4M10 2q2.500 3.500 0 7"/><path d="M12 1q2 4.500 0 9" opacity=".5"/></svg>
                <svg width="14" height="11"><path d="M3.500 3.500h9v6h-9z" stroke="#fff" fill="none"/><path d="M5 5h6v3H5z" fill="#fff"/><path d="M1 0v3h3V0M2.500 3v6" stroke="#fff" fill="none"/></svg>
                <span>ҚАЗ</span>
            </div>
            <div class="clock text-center">19:59<br>22.11.2021</div>
            <div class="position-relative" style="margin-left: 14px">
                <svg width="15" height="16"><path d="M0 0h14v11H7l-3 4v-4H0z" fill="#fff"/><path d="M2 3h10M2 5.500h10M2 8h7" stroke="#1b2a49"/></svg>
                <span class="note-num position-absolute text-center">1</span>
            </div>
            <div class="desk-edge border-start border-secondary"></div>
        </div>
    </footer>

    <script>
        // Участники
        const people = ['Mereke  Zhuma...', 'Туркменбаев  А...', 'Abdykerimova...', 'Moldir  Allaniya...', 'Басшыкызы Д', '21-04  Наурызб...'];
        document.getElementById('people').innerHTML = people.map((n, i) =>
            `<div class="person position-relative d-flex align-items-center justify-content-center">${n}` +
            (i < 5 ? '<span class="muted position-absolute d-flex align-items-center justify-content-center"><svg width="12" height="13"><use href="#mute"/></svg></span>' : '') + '</div>').join('');

        // Вкладки
        const tabs = ['Dosya', 'Giriş', 'Ekle', 'Tasarım', 'Geçişler', 'Animasyonlar', 'Slayt Gösterisi', 'Gözden Geçir', 'Görünüm', 'Yardım'];
        document.getElementById('tabs').innerHTML = tabs.map(t => `<a href="#" class="tab-link${t === 'Giriş' ? ' active' : ''}">${t}</a>`).join('');

        // Линейки
        let h = '', v = '';
        for (let i = -12; i <= 12; i++) h += `<span>${Math.abs(i)}</span>`;
        for (let i = -9; i <= 8; i++) v += `<span>${Math.abs(i)}</span>`;
        document.getElementById('hruler').innerHTML = h;
        document.getElementById('vruler').innerHTML = v;

        // Строки мелкого текста: x, y, ширина, цвет
        function rows(list) {
            return list.map(([x, y, w, c = '#999'], i) => `<path d="M${x} ${y}h${w}" stroke="${c}" stroke-dasharray="${3 + i % 3} .6 ${2 + i % 2} .5"/>`).join('');
        }
        function block(x, y, w, n, step, c) {
            const out = [];
            for (let i = 0; i < n; i++) out.push([x, y + i * step, w - (i * 7) % 6, c]);
            return rows(out);
        }
        const slides = [
            ['Nanotechnology&amp;Nanomaterials', 4.5, 11, rows([[23, 18, 23, '#222'], [26, 20.5, 17], [20, 23, 29], [23, 29, 24, '#bbb']]) +
                '<text x="35" y="37" font-size="2.6">Lec-4 Surface Science of Nanomaterials</text>'],
            ['Contents', 4.5, 6, '<path d="M5 9h59v37H5z" fill="none" stroke="#d05050"/>' + block(6, 11, 3, 11, 2.4, '#f09090') + block(11, 11, 32, 7, 2.4, '#9aa') + block(11, 28, 50, 4, 2.4)],
            ['Introduction', 4, 7, block(6, 11, 58, 2, 2.5, '#888') + block(6, 18, 56, 2, 2.5) + rows([[40, 18, 15, '#222'], [41, 20.5, 10, '#d22']]) + block(6, 25, 57, 3, 2.4, '#999') + block(6, 32, 60, 3, 2.3) + block(6, 39, 59, 3, 2.4, '#999') + rows([[31, 11, 30, '#222'], [18, 13.5, 22, '#222'], [40, 25, 15, '#222'], [41, 39, 16, '#d55'], [6, 41.4, 22, '#222'], [4, 11, 2, '#111'], [4, 18, 2, '#111'], [4, 25, 2, '#111'], [4, 32, 2, '#111'], [4, 39, 2, '#111']])],
            ['Bonding and Band Structure', 4, 7, block(4, 11, 27, 8, 2.5) + block(3, 36, 38, 4, 2.4) + '<path d="M41 10v18M47 30v18" stroke="#999" stroke-width=".5"/><path d="M41 18h18M47 41h15" stroke="#d99" stroke-width=".5"/><path d="M45 26h6M43 45h3" stroke="#1a9c6c" stroke-width="2.5"/><path d="M7 2v4" stroke="#447" stroke-width="2"/>' + rows([[54, 25, 13, '#333'], [52, 31, 16]])],
            ['Band Theory', 4, 7, block(4, 11, 36, 15, 2.6) + '<path d="M44 10v14M66 18v6" stroke="#aaf"/><path d="M67 9v5" stroke="#1a9c6c" stroke-width="2"/><path d="M47 28h15v9H47z" fill="none" stroke="#4cc"/>' + rows([[50, 12, 12, '#bbe'], [45, 26, 20, '#99d'], [46, 39, 22, '#7bb'], [50, 32, 9]])],
            ['Energy Band Theory', 4, 8, block(3, 12, 35, 10, 2.5, '#999') + rows([[22, 35, 16, '#111'], [3, 37.5, 35, '#333'], [3, 40, 8, '#111'], [50, 11, 13], [50, 19, 14], [41, 24, 26, '#777'], [38, 29, 27], [38, 31.5, 28], [38, 34, 10], [44, 40, 9]]) + '<path d="M50 13h13v3H50zM50 21h14v2H50z" fill="#ddd" stroke="#999" stroke-width=".5"/><path d="M37 26h3" stroke="#1a9c6c" stroke-width="2"/>'],
            ['Energy Band For Insulator and SC', 3.5, 6, '']
        ];
        document.getElementById('thumbs').innerHTML = slides.map(([t, size, y, body], i) =>
            `<div class="thumb-row d-flex"><span class="thumb-num${i === 5 ? ' red-num' : ''}">${i + 1}</span><div class="thumb${i === 5 ? ' thumb-on' : ''}">` +
            `<svg width="69" height="52" font-family="Liberation Serif, serif" font-weight="700" fill="#b01116" text-anchor="middle"><text x="35" y="${y}" font-size="${size}">${t}</text>${body}</svg></div></div>`).join('');
    </script>
    <script src="https://cdn.jsdelivr.net/npm/bootstrap@5.3.2/dist/js/bootstrap.bundle.min.js"></script>
</body>
</html>
